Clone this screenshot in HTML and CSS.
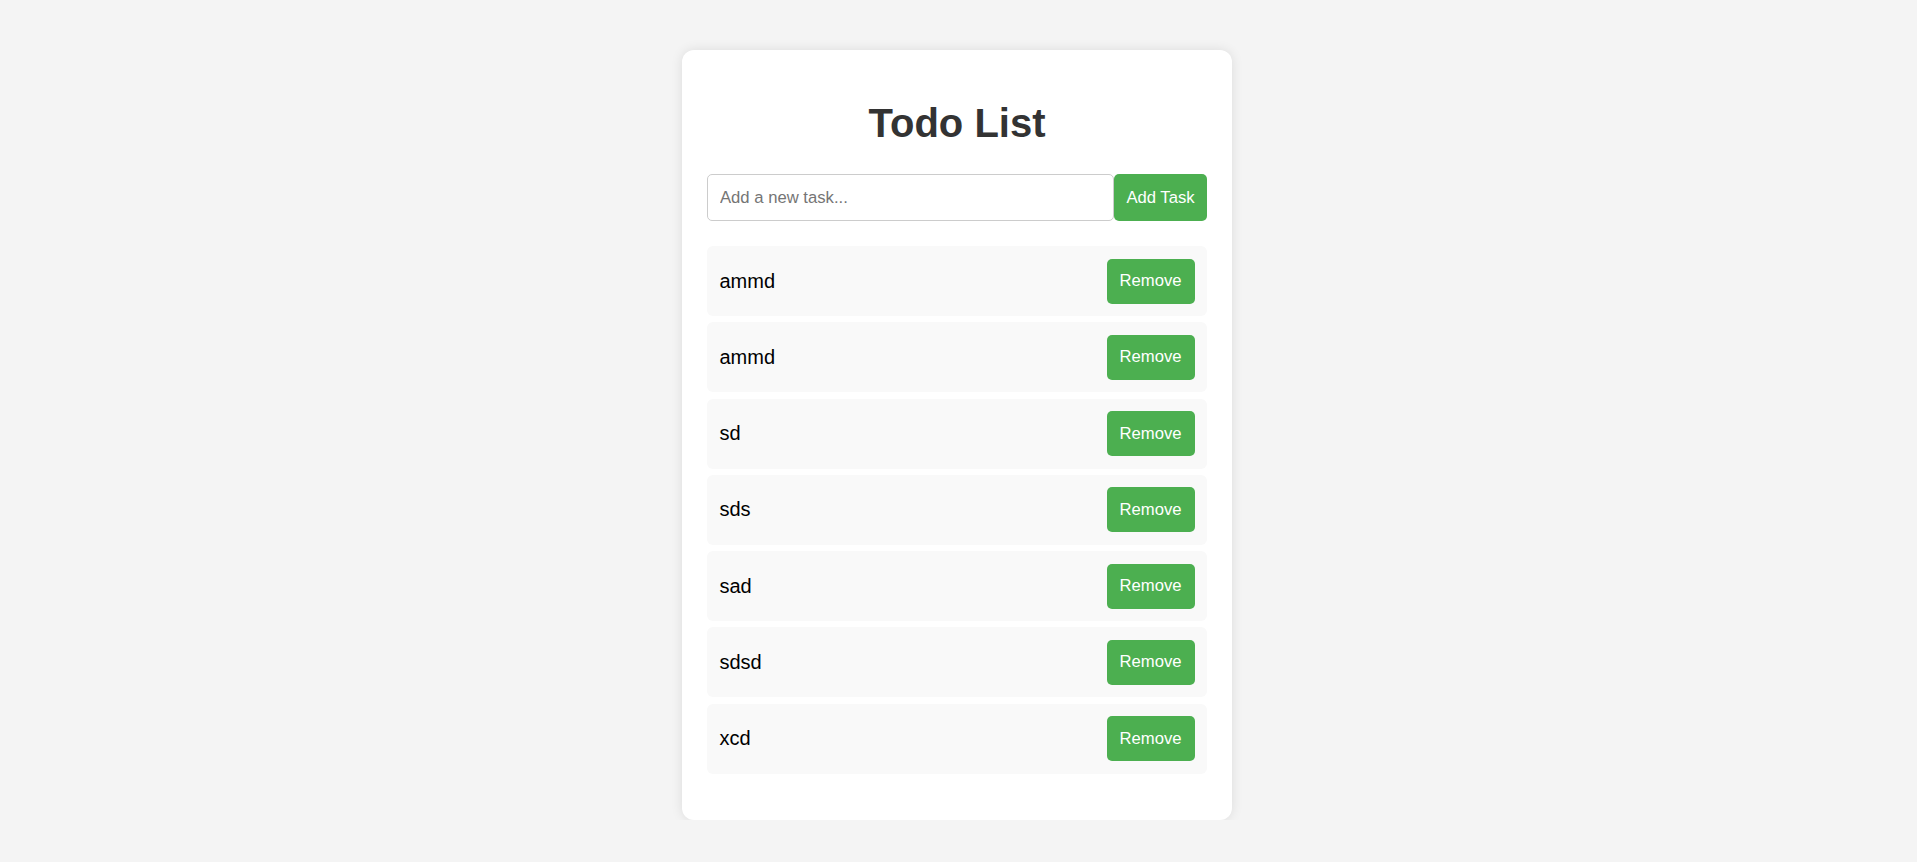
FILE: index.html
```html
<!DOCTYPE html>
<html lang="en">
<head>
<meta charset="utf-8">
<title>Todo List</title>
<link rel="stylesheet" href="styles.css">
</head>
<body>
<div class="container">
  <h1 class="title">Todo List</h1>
  <div class="add-row">
    <input class="task-input" type="text" placeholder="Add a new task...">
    <button class="btn add-btn">Add Task</button>
  </div>
  <ul class="task-list">
    <li class="task"><span class="task-text">ammd</span><button class="btn remove-btn">Remove</button></li>
    <li class="task"><span class="task-text">ammd</span><button class="btn remove-btn">Remove</button></li>
    <li class="task"><span class="task-text">sd</span><button class="btn remove-btn">Remove</button></li>
    <li class="task"><span class="task-text">sds</span><button class="btn remove-btn">Remove</button></li>
    <li class="task"><span class="task-text">sad</span><button class="btn remove-btn">Remove</button></li>
    <li class="task"><span class="task-text">sdsd</span><button class="btn remove-btn">Remove</button></li>
    <li class="task"><span class="task-text">xcd</span><button class="btn remove-btn">Remove</button></li>
  </ul>
</div>
</body>
</html>
```

FILE: styles.css
```css
html, body {
  margin: 0;
  padding: 0;
}
body {
  background: #f4f4f4;
  font-family: "Liberation Sans", Arial, sans-serif;
  font-size: 20px;
  color: #000;
  padding-right: 3px;
}
.container {
  width: 500px;
  margin: 50px auto 0;
  padding: 25px;
  background: #fff;
  border-radius: 12px;
  box-shadow: 0 0 12px rgba(0, 0, 0, 0.1);
}
.title {
  margin: 25px 0 28px;
  text-align: center;
  font-size: 40px;
  font-weight: bold;
  color: #333;
  line-height: 46px;
}
.add-row {
  display: flex;
  margin-bottom: 25px;
}
.task-input {
  flex: 1;
  min-width: 0;
  height: 47px;
  box-sizing: border-box;
  padding: 0 12px;
  border: 1px solid #ccc;
  border-radius: 5px;
  font-family: "Liberation Sans", Arial, sans-serif;
  font-size: 16.67px;
  color: #000;
  outline: none;
}
.task-input::placeholder {
  color: #757575;
}
.btn {
  border: none;
  border-radius: 5px;
  background: #4caf50;
  color: #fff;
  font-family: "Liberation Sans", Arial, sans-serif;
  font-size: 16.67px;
  padding: 0;
  cursor: pointer;
}
.add-btn {
  width: 93px;
  height: 47px;
}
.task-list {
  list-style: none;
  margin: 0 0 21px;
  padding: 0;
}
.task {
  display: flex;
  align-items: center;
  justify-content: space-between;
  padding: 12.5px;
  margin-bottom: 6.25px;
  background: #f9f9f9;
  border-radius: 6px;
}
.task-text {
  font-size: 20px;
}
.remove-btn {
  width: 88px;
  height: 45px;
}
```
